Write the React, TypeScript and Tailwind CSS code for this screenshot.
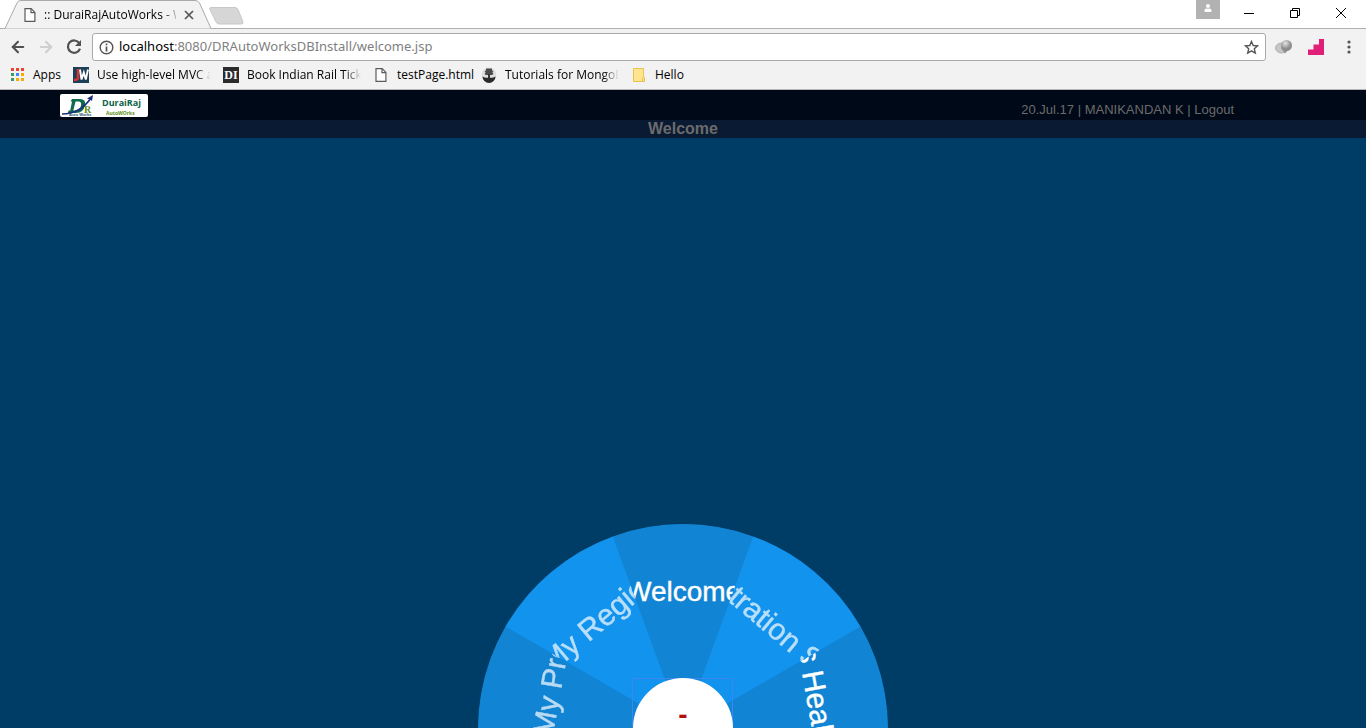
import React from "react";
import { FaUser } from "react-icons/fa";
import { ArrowLeft, ArrowRight } from "lucide-react";

const UI = "font-['Open_Sans',sans-serif]";

function PageIcon() {
  return (
    <svg width="12" height="14" viewBox="0 0 12 14" fill="#fff" stroke="#5a5a5a" strokeWidth="1.2" className="shrink-0" aria-hidden="true">
      <path d="M1 .7h6.2L10.9 4.400V13.300H1z" />
      <path d="M7 .8v3.800h3.800" fill="none" />
    </svg>
  );
}

function TitleBar() {
  return (
    <div className="flex h-7 items-end bg-white">
      <div className="relative h-7 w-[244px] shrink-0">
        <svg className="absolute inset-0" width="244" height="29" viewBox="0 0 244 29" aria-hidden="true">
          <path d="M5 28.500 17 3Q18 .5 21 .5H195Q198 .5 199.500 3L211 28.500" fill="#f2f2f2" stroke="#a9a9a9" />
          <path d="M211 7.500H235Q237 7.500 238 9.500L243 22Q243.500 24 241 24H219Q217 24 216 22L210 9.500Q209 7.500 211 7.500Z" fill="#d6d6d6" stroke="#c8c8c8" />
        </svg>
        <div className="relative flex h-7 items-center gap-2 pt-0.5 pl-6">
          <PageIcon />
          <span className={`${UI} w-[132px] overflow-hidden text-xs whitespace-nowrap text-black mask-[linear-gradient(to_right,black_90%,#0004)]`}>:: DuraiRajAutoWorks - Welcome</span>
          <button aria-label="Close tab">
            <svg width="10" height="10" viewBox="0 0 10 10" stroke="#555" strokeWidth="1.700" className="block"><path d="m1 1 8 8M9 1 1 9" /></svg>
          </button>
        </div>
      </div>
      <div className="ml-auto flex h-7 items-start">
        <button aria-label="Profile" className="flex h-[19px] w-6 justify-center bg-[#b2b2b2] pt-1 text-[8px] text-white"><FaUser /></button>
        <div className="flex gap-9 pt-2 pr-5 pl-6">
          <button aria-label="Minimize"><svg width="10" height="10" className="block" viewBox="0 0 10 10"><path d="M0 5.500h10" stroke="#000" /></svg></button>
          <button aria-label="Restore"><svg width="10" height="10" className="block" viewBox="0 0 10 10" fill="none" stroke="#000"><path d="M.5 2.500h7v7h-7zM2.500 2V.5h7v7H8" /></svg></button>
          <button aria-label="Close"><svg width="10" height="10" className="block" viewBox="0 0 10 10" stroke="#000"><path d="m0 0 10 10M10 0 0 10" /></svg></button>
        </div>
      </div>
    </div>
  );
}

function Toolbar() {
  return (
    <div className="flex h-[37px] items-center border-t border-[#b0b0b0] bg-[#f2f2f2] pr-[15px] pl-[9px]">
      <button aria-label="Back"><ArrowLeft size={18} strokeWidth={2.8} color="#505050" /></button>
      <button aria-label="Forward" className="ml-2.5"><ArrowRight size={18} strokeWidth={2.8} color="#cfcfcf" /></button>
      <button aria-label="Reload" className="ml-2.5">
        <svg width="18" height="18" viewBox="0 0 18 18" className="block"><path d="M14.300 5.200A6.200 6.200 0 1 0 15 10.700" fill="none" stroke="#505050" strokeWidth="2.200" /><path d="M16 2v6h-6z" fill="#505050" /></svg>
      </button>
      <div className="ml-[9px] flex h-7 min-w-0 flex-1 items-center rounded-[3px] border border-[#a9a9a9] bg-white px-1.5">
        <svg width="15" height="15" viewBox="0 0 15 15" className="shrink-0" aria-hidden="true"><circle cx="7.500" cy="7.500" r="6.300" fill="none" stroke="#555" strokeWidth="1.400" /><path d="M7.500 3.400v1.800M7.500 6.500v5" stroke="#555" strokeWidth="1.700" /></svg>
        <a href="#address" className="ml-[5px] flex-1 font-['Noto_Sans',sans-serif] text-[13px] text-[#808080]"><span className="text-black">localhost</span>:8080/DRAutoWorksDBInstall/welcome.jsp</a>
        <button aria-label="Bookmark this page">
          <svg width="15" height="15" viewBox="0 0 15 15" className="block" fill="none" stroke="#555" strokeWidth="1.400"><path d="m7.500 1.500 1.700 4 4.400.4-3.300 2.900 1 4.300-3.800-2.300-3.800 2.300 1-4.300L1.400 5.900l4.400-.4z" /></svg>
        </button>
      </div>
      <button aria-label="Globe extension" className="ml-[9px]">
        <svg width="18" height="18" viewBox="0 0 18 18" className="block">
          <defs><radialGradient id="ball" cx="40%" cy="30%"><stop stopColor="#e5e5e5" /><stop offset="1" stopColor="#8c8c8c" /></radialGradient></defs>
          <ellipse cx="6.500" cy="10" rx="6" ry="5" fill="#c6c6c6" stroke="#b0b0b0" /><path d="m6 10 4 5.500 6-6.500z" fill="#8f8f8f" /><circle cx="11.500" cy="7.500" r="5.500" fill="url(#ball)" />
        </svg>
      </button>
      <button aria-label="Stairs extension" className="ml-[15px]">
        <svg width="16" height="16" viewBox="0 0 16 16" className="block"><path d="M0 16v-5.500h5.500V5.500h5.500V0h5v16z" fill="#e01f79" /></svg>
      </button>
      <button aria-label="Menu" className="ml-[23px]">
        <svg width="4" height="14" viewBox="0 0 4 14" className="block" fill="#555"><circle cx="2" cy="2" r="1.600" /><circle cx="2" cy="7" r="1.600" /><circle cx="2" cy="12" r="1.600" /></svg>
      </button>
    </div>
  );
}

function Bookmark({ icon, label, width, fade }: { icon: React.ReactNode; label: string; width: string; fade?: boolean }) {
  return (
    <a href="#bookmark" className="flex items-center gap-2">
      <span className="flex w-4 shrink-0 justify-center">{icon}</span>
      <span className={`${width} whitespace-nowrap ${fade ? "overflow-hidden mask-[linear-gradient(to_right,black_86%,transparent)]" : ""}`}>{label}</span>
    </a>
  );
}

const APP_DOTS = ["#ea4335", "#ea4335", "#ea4335", "#34a060", "#4285f4", "#f9ab00", "#34a060", "#f9ab00", "#f9ab00"];

function Bookmarks() {
  return (
    <nav className={`${UI} flex h-[25px] items-center gap-3 border-b border-[#b5b5b5] bg-[#f2f2f2] pb-1 pl-[9px] text-xs text-black`}>
      <Bookmark label="Apps" width="w-7" icon={
        <svg width="14" height="14" viewBox="0 0 14 14" aria-hidden="true">{APP_DOTS.map((c, i) => <rect key={i} x={(i % 3) * 5 + 1} y={Math.floor(i / 3) * 5} width="3" height="3" fill={c} />)}</svg>} />
      <Bookmark fade label="Use high-level MVC and" width="w-[114px]" icon={
        <svg width="16" height="16" viewBox="0 0 16 16" aria-hidden="true"><path fill="#1d4058" d="M0 0h16v16H0z" /><path d="M5 2v8.500q0 2.500-4 2.500" stroke="#d5352c" strokeWidth="2.500" fill="none" /><path d="m7 2.500 1.500 10 2.300-7 2 7L15 2.500" stroke="#fff" strokeWidth="1.900" fill="none" /></svg>} />
      <Bookmark fade label="Book Indian Rail Tickets" width="w-[114px]" icon={
        <span className="flex h-4 w-4 items-center justify-center bg-[#2b2b2b] font-['Liberation_Serif',serif] text-xs leading-4 font-bold text-white">DI</span>} />
      <Bookmark label="testPage.html" width="w-[72px]" icon={<PageIcon />} />
      <Bookmark fade label="Tutorials for MongoDB" width="w-[114px]" icon={
        <svg width="16" height="16" viewBox="0 0 16 16" aria-hidden="true"><circle cx="8" cy="8" r="7.500" fill="#dedede" /><path d="M5 1.500h6v2l1.500.5-1 1.500 1 1.500L11 8H5L3.500 7l1-1.500-1-1.500L5 3.500z" fill="#4a4a4a" /><path d="M1.500 9.500q3 2 6.500 1 3.500 1 6.500-1a6.500 6.500 0 0 1-13 0z" fill="#2b2b2b" /><path d="M7 7h2v4H7z" fill="#333" /></svg>} />
      <Bookmark label="Hello" width="w-8" icon={
        <svg width="12" height="14" viewBox="0 0 12 14" aria-hidden="true"><path d="M.5.5h10v9h1v4H.5z" fill="#ffe58f" stroke="#e7c34b" /><path d="M9.500 10v3.500" stroke="#e7c34b" /></svg>} />
    </nav>
  );
}

function Logo() {
  return (
    <svg width="88" height="23" viewBox="0 0 88 23" role="img" aria-label="DuraiRaj AutoWorks" className="block">
      <rect width="88" height="23" rx="2" fill="#fff" />
      <path fillRule="evenodd" d="M12 5h8q6 0 5 6-1.500 8-9 8H8l.6-2.500h1.600L12 7.500h-1.500zM15.500 7.500 13.300 16.500H16q4 0 5-5 .7-4-2.500-4z" fill="#0f6b4e" />
      <text x="24" y="19" fontFamily="Liberation Serif" fontWeight="700" fontSize="10" fill="#5d8f16">R</text>
      <path d="M2 20Q20 20 31 4" stroke="#1c2d7d" strokeWidth="1.600" fill="none" />
      <path d="m33 1-1 6-2-1.500-3-1z" fill="#1c2d7d" />
      <text x="9" y="22" fontFamily="Liberation Sans" fontWeight="700" fontSize="4" fill="#15506b">Auto Works</text>
      <text x="42" y="12" fontFamily="Open Sans" fontWeight="700" fontSize="9" fill="#0d6248">DuraiRaj</text>
      <text x="46" y="21" fontFamily="Open Sans" fontWeight="700" fontSize="5" fill="#5d8f16">AutoWOrks</text>
    </svg>
  );
}

const SECTORS = [
  { angle: -80, label: "My Profile", start: -31, size: 30, baseline: -127, fill: "#1284d4", opacity: 0.7 },
  { angle: -40, label: "My Region", start: -65, size: 30, baseline: -127, fill: "#1193ee", opacity: 0.7 },
  { angle: 80, label: "Vehicles Health", start: -155, size: 30, baseline: -127, fill: "#1284d4", opacity: 1 },
  { angle: 40, label: "Registration Status", start: -126, size: 30, baseline: -127, fill: "#1193ee", opacity: 0.7 },
  { angle: 0, label: "Welcome", start: -58, size: 28, baseline: -128, fill: "#1284d4", opacity: 1 },
];

const SECTOR_PATH = "M0 0-70.100-192.600A205 205 0 0 1 70.100-192.600Z";

function Wheel() {
  return (
    <svg width="410" height="204" viewBox="-205 -205 410 204" className="block" role="img" aria-label="Navigation wheel">
      <defs>
        <clipPath id="sector"><path d={SECTOR_PATH} /></clipPath>
      </defs>
      <circle r="204.500" fill="#1284d4" />
      {SECTORS.map((s) => (
        <g key={s.angle} transform={`rotate(${s.angle})`}>
          <path d={SECTOR_PATH} fill={s.fill} />
          <g clipPath="url(#sector)">
            <text x={s.start} y={s.baseline} fontFamily="Liberation Sans" fontSize={s.size} fill="#fff" stroke="#fff" strokeWidth="0.400" opacity={s.opacity}>{s.label}</text>
          </g>
        </g>
      ))}
      <rect x="-50.500" y="-50.500" width="100" height="100" fill="none" stroke="#3b86f3" />
      <circle cy="-1" r="50" fill="#fff" />
      <text x="0" y="-5" textAnchor="middle" fontFamily="Liberation Sans" fontWeight="700" fontSize="28" fill="#b01010">-</text>
    </svg>
  );
}

export default function App() {
  return (
    <div className="flex min-h-screen flex-col bg-[#003d66] font-['Liberation_Sans',Arial,sans-serif]">
      <TitleBar />
      <Toolbar />
      <Bookmarks />
      <header className="flex h-[30px] items-start justify-between bg-[#000918] pt-1 pr-[132px] pl-[60px]">
        <Logo />
        <p className="pt-[7px] text-[13px] leading-[18px] text-[#6b6b6b]">20.Jul.17 | MANIKANDAN K | <a href="#logout">Logout</a></p>
      </header>
      <h1 className="h-[18px] bg-[#0a1a33] text-center text-base leading-[18px] font-bold text-[#6b6b6b]">Welcome</h1>
      <main className="flex flex-1 items-end justify-center">
        <Wheel />
      </main>
    </div>
  );
}
